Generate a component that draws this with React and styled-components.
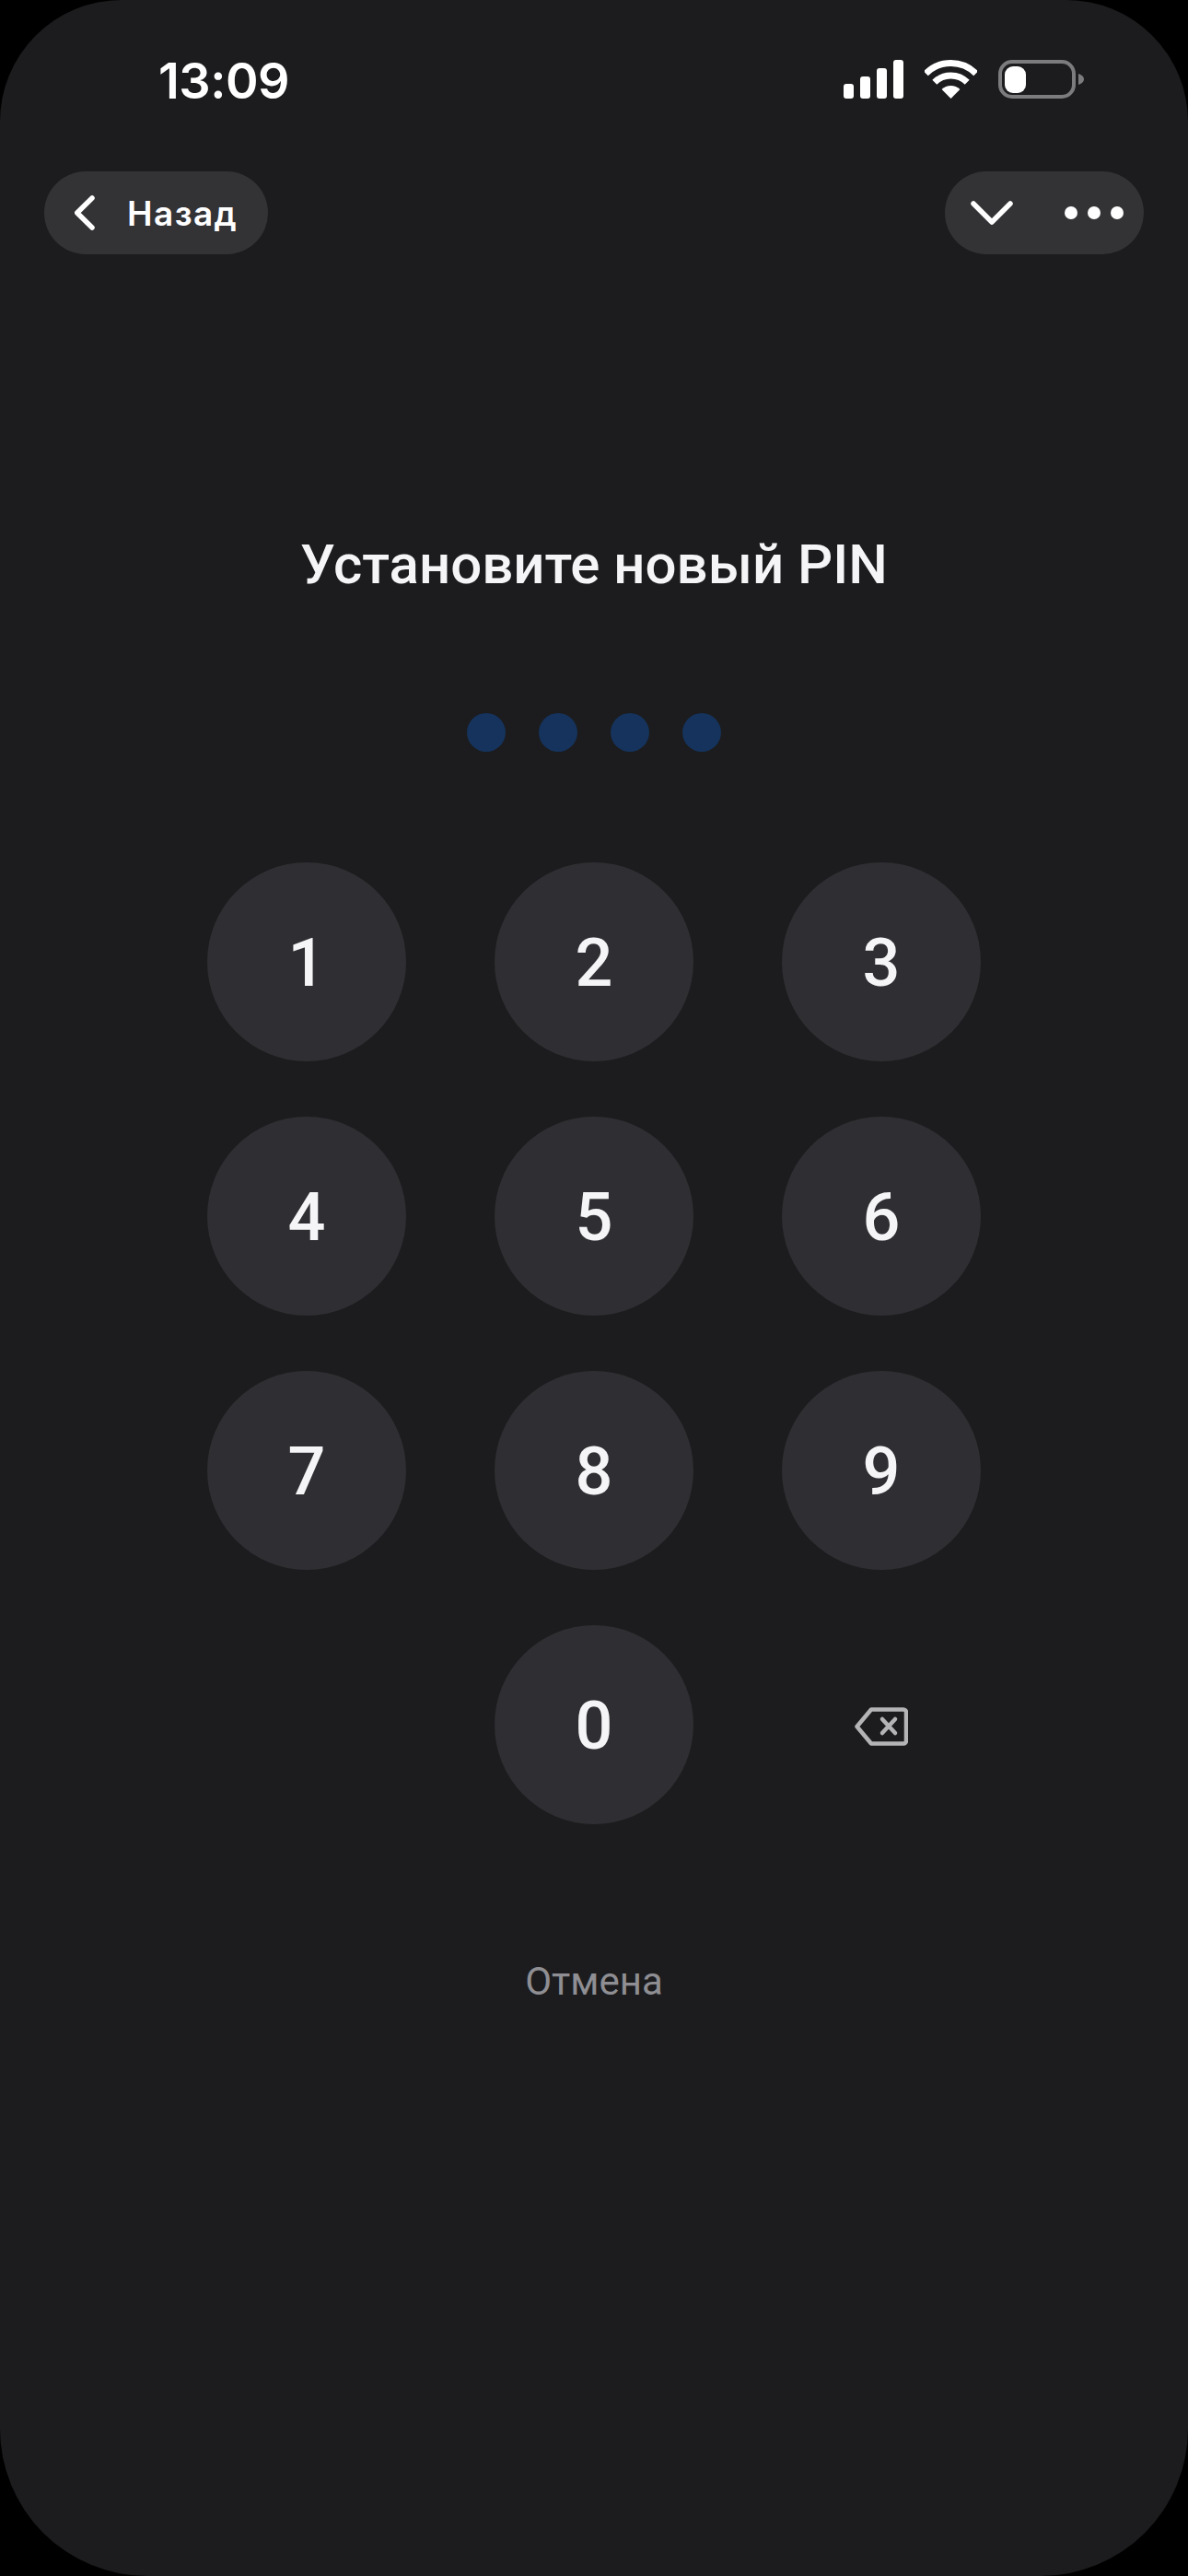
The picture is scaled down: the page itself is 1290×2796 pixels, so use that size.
import styled, { createGlobalStyle } from 'styled-components';

const Global = createGlobalStyle`
  html, body {
    margin: 0;
    padding: 0;
    background: #000;
  }
`;

const Screen = styled.div`
  width: 1290px;
  height: 2796px;
  box-sizing: border-box;
  background: #1c1c1e;
  border-radius: 132px 132px 160px 160px;
  overflow: hidden;
  display: flex;
  flex-direction: column;
  font-family: Roboto, "Noto Sans", sans-serif;
  color: #f5f5f7;
`;

const StatusBar = styled.div`
  height: 186px;
  box-sizing: border-box;
  padding: 65px 113px 0 172px;
  display: flex;
  justify-content: space-between;
  align-items: flex-start;
`;

const Time = styled.div`
  font-family: Inter, sans-serif;
  font-size: 54px;
  font-weight: 600;
  line-height: 46px;
  letter-spacing: -0.5px;
  color: #fff;
`;

const StatusIcons = styled.div`
  display: flex;
  align-items: flex-start;
  gap: 23px;
`;

const NavBar = styled.div`
  height: 90px;
  padding: 0 48px;
  display: flex;
  justify-content: space-between;
`;

const Pill = styled.div`
  height: 90px;
  border-radius: 45px;
  background: #333336;
  display: flex;
  align-items: center;
  box-sizing: border-box;
`;

const BackPill = styled(Pill)`
  width: 243px;
  padding-left: 33px;
  gap: 33px;
`;

const BackLabel = styled.span`
  font-family: Inter, sans-serif;
  font-size: 37px;
  font-weight: 600;
  color: #fff;
  letter-spacing: 1.4px;
`;

const ActionsPill = styled(Pill)`
  width: 216px;
  padding-left: 28px;
  gap: 56px;
`;

const Title = styled.h1`
  margin: 301px 0 0;
  font-size: 60px;
  font-weight: 500;
  line-height: 72px;
  text-align: center;
`;

const Dots = styled.div`
  margin-top: 125px;
  display: flex;
  justify-content: center;
  gap: 36px;
`;

const Dot = styled.div`
  width: 42px;
  height: 42px;
  border-radius: 50%;
  background: #15335c;
`;

const Keypad = styled.div`
  margin-top: 120px;
  display: grid;
  grid-template-columns: repeat(3, 216px);
  grid-auto-rows: 216px;
  column-gap: 96px;
  row-gap: 60px;
  justify-content: center;
`;

const Key = styled.div`
  box-sizing: border-box;
  padding-top: 3px;
  border-radius: 50%;
  background: ${(p) => (p.$bare ? 'transparent' : '#2f2f33')};
  display: flex;
  align-items: center;
  justify-content: center;
  font-size: 72px;
  font-weight: 500;
`;

const Cancel = styled.div`
  margin-top: 147px;
  font-size: 42px;
  line-height: 48px;
  text-align: center;
  color: #8e8e93;
`;

function SignalIcon() {
  return (
    <svg width="65" height="42" viewBox="0 0 65 42" fill="#fff">
      <rect x="0" y="26" width="11" height="16" rx="3" />
      <rect x="18" y="18" width="11" height="24" rx="3" />
      <rect x="36" y="9" width="11" height="33" rx="3" />
      <rect x="54" y="0" width="11" height="42" rx="3" />
    </svg>
  );
}

function WifiIcon() {
  return (
    <svg width="57" height="42" viewBox="0 0 57 42" fill="none">
      <path d="M1.3 14.8A38.5 38.5 0 0 1 55.7 14.8" stroke="#fff" strokeWidth="7" />
      <path d="M10.8 24.3A25 25 0 0 1 46.2 24.3" stroke="#fff" strokeWidth="7" />
      <path d="M28.5 42L18.6 32.1A14 14 0 0 1 38.4 32.1Z" fill="#fff" />
    </svg>
  );
}

function BatteryIcon() {
  return (
    <svg width="93" height="42" viewBox="0 0 93 42" fill="none">
      <rect x="2" y="2" width="80" height="38" rx="13" stroke="#7c7c7e" strokeWidth="4" />
      <rect x="7" y="7" width="23" height="29" rx="9" fill="#fff" />
      <path d="M87 15C90 16 93 18 93 21C93 24 90 26 87 27Z" fill="#7c7c7e" />
    </svg>
  );
}

function BackChevron() {
  return (
    <svg width="24" height="38" viewBox="0 0 24 38" fill="none">
      <path d="M19 3L2.75 19L19 35" stroke="#fff" strokeWidth="5.5" strokeLinecap="round" strokeLinejoin="round" />
    </svg>
  );
}

function DownChevron() {
  return (
    <svg width="46" height="26" viewBox="0 0 46 26" fill="none">
      <path d="M3 3L23 23L43 3" stroke="#fff" strokeWidth="5.5" strokeLinecap="round" strokeLinejoin="round" />
    </svg>
  );
}

function MoreDots() {
  return (
    <svg width="64" height="14" viewBox="0 0 64 14" fill="#fff">
      <circle cx="7" cy="7" r="7" />
      <circle cx="32" cy="7" r="7" />
      <circle cx="57" cy="7" r="7" />
    </svg>
  );
}

function BackspaceIcon() {
  return (
    <svg width="58" height="42" viewBox="0 0 58 42" fill="none" stroke="#b4b4b6" strokeWidth="4.5" strokeLinejoin="round" strokeLinecap="round">
      <path d="M18 2.5H53A3 3 0 0 1 56 5.5V36.5A3 3 0 0 1 53 39.5H18L2.5 21Z" />
      <path d="M30 13L44 28M44 13L30 28" />
    </svg>
  );
}

const digits = ['1', '2', '3', '4', '5', '6', '7', '8', '9'];

export default function App() {
  return (
    <>
      <Global />
      <Screen>
        <StatusBar>
          <Time>13:09</Time>
          <StatusIcons>
            <SignalIcon />
            <WifiIcon />
            <BatteryIcon />
          </StatusIcons>
        </StatusBar>
        <NavBar>
          <BackPill>
            <BackChevron />
            <BackLabel>Назад</BackLabel>
          </BackPill>
          <ActionsPill>
            <DownChevron />
            <MoreDots />
          </ActionsPill>
        </NavBar>
        <Title>Установите новый PIN</Title>
        <Dots>
          <Dot />
          <Dot />
          <Dot />
          <Dot />
        </Dots>
        <Keypad>
          {digits.map((d) => (
            <Key key={d}>{d}</Key>
          ))}
          <div />
          <Key>0</Key>
          <Key $bare>
            <BackspaceIcon />
          </Key>
        </Keypad>
        <Cancel>Отмена</Cancel>
      </Screen>
    </>
  );
}
